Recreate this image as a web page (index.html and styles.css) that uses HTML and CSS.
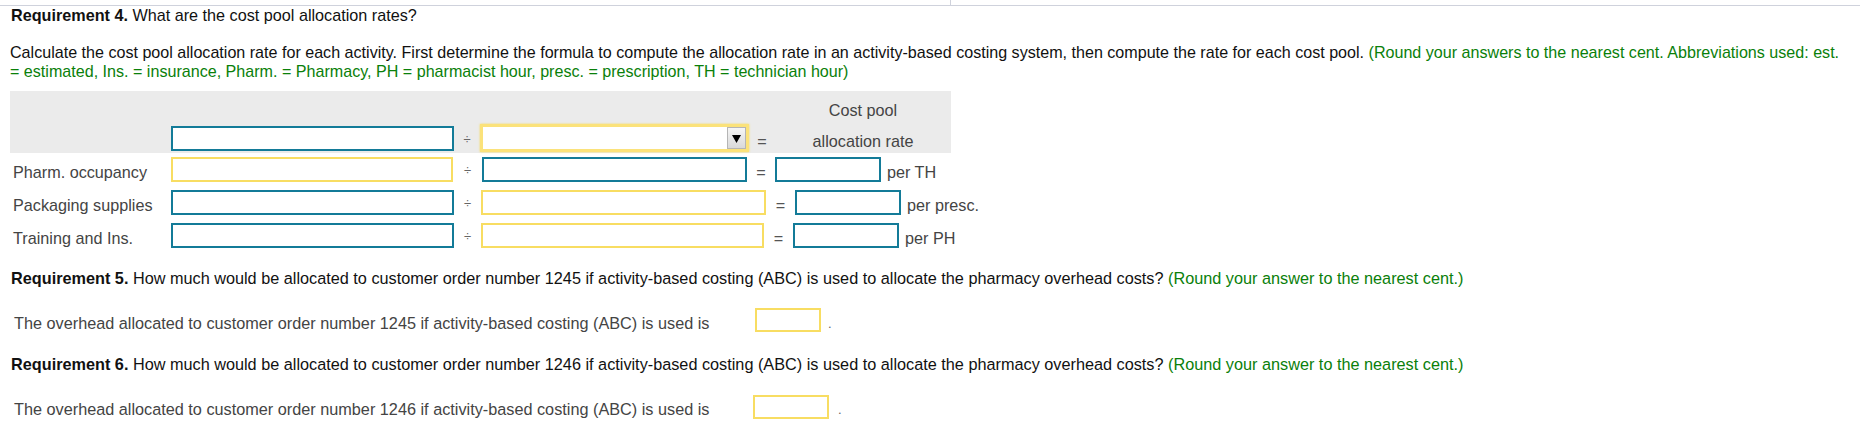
FILE: index.html
```html
<!DOCTYPE html>
<html lang="en">
<head>
<meta charset="utf-8">
<title>Requirement 4</title>
<link rel="stylesheet" href="styles.css">
</head>
<body>
<div class="topbar"><div class="topbar-seg"></div></div>
<div class="content">
  <p class="req"><b>Requirement 4.</b> What are the cost pool allocation rates?</p>
  <p class="instr">Calculate the cost pool allocation rate for each activity. First determine the formula to compute the allocation rate in an activity-based costing system, then compute the rate for each cost pool. <span class="green">(Round your answers to the nearest cent. Abbreviations used: est.<br>= estimated, Ins. = insurance, Pharm. = Pharmacy, PH = pharmacist hour, presc. = prescription, TH = technician hour)</span></p>

  <div class="abc">
    <div class="row head">
      <div class="lbl"></div>
      <input class="box teal w283" type="text">
      <div class="op op26">÷</div>
      <div class="select">
        <div class="arrow"><svg width="11" height="11" viewBox="0 0 11 11"><polygon points="1,2 10,2 5.5,10" fill="#000"/></svg></div>
      </div>
      <div class="eq eq26">=</div>
      <div class="rate-head"><div>Cost pool</div><div>allocation rate</div></div>
    </div>

    <div class="row">
      <div class="lbl">Pharm. occupancy</div>
      <input class="box yellow w282" type="text">
      <div class="op op29">÷</div>
      <input class="box teal w265" type="text">
      <div class="eq eq28">=</div>
      <input class="box teal w106" type="text">
      <div class="unit">per TH</div>
    </div>

    <div class="row">
      <div class="lbl">Packaging supplies</div>
      <input class="box teal w283" type="text">
      <div class="op op27">÷</div>
      <input class="box yellow w285" type="text">
      <div class="eq eq29">=</div>
      <input class="box teal w106" type="text">
      <div class="unit">per presc.</div>
    </div>

    <div class="row">
      <div class="lbl">Training and Ins.</div>
      <input class="box teal w283" type="text">
      <div class="op op27">÷</div>
      <input class="box yellow w283" type="text">
      <div class="eq eq29">=</div>
      <input class="box teal w106" type="text">
      <div class="unit">per PH</div>
    </div>
  </div>

  <p class="req wide req5"><b>Requirement 5.</b> How much would be allocated to customer order number 1245 if activity-based costing (ABC) is used to allocate the pharmacy overhead costs? <span class="green">(Round your answer to the nearest cent.)</span></p>
  <div class="answer ans1">
    <div class="answer-text t1">The overhead allocated to customer order number 1245 if activity-based costing (ABC) is used is</div>
    <input class="box yellow small w66" type="text">
    <div class="dot">.</div>
  </div>

  <p class="req wide req6"><b>Requirement 6.</b> How much would be allocated to customer order number 1246 if activity-based costing (ABC) is used to allocate the pharmacy overhead costs? <span class="green">(Round your answer to the nearest cent.)</span></p>
  <div class="answer ans2">
    <div class="answer-text t2">The overhead allocated to customer order number 1246 if activity-based costing (ABC) is used is</div>
    <input class="box yellow small w76" type="text">
    <div class="dot dot2">.</div>
  </div>
</div>
</body>
</html>
```

FILE: styles.css
```css
html, body {
  margin: 0;
  padding: 0;
  background: #ffffff;
}

body {
  font-family: "Liberation Sans", Arial, sans-serif;
  font-size: 16.2px;
  line-height: 19px;
  color: #111111;
}

.topbar {
  display: flex;
  height: 5px;
  border-bottom: 1px solid #cfd2dc;
}

.topbar-seg {
  width: 950px;
  border-right: 1px solid #cfd2dc;
}

.content {
  padding-left: 10px;
}

.req {
  margin: 0;
  padding-left: 1px;
}

.wide {
  font-size: 16.25px;
}

.instr {
  margin: 18px 0 0 0;
  font-size: 16.1px;
  white-space: nowrap;
}

.green {
  color: #0a800a;
}

/* activity table */
.abc {
  margin-top: 10px;
  width: 941px;
}

.row {
  display: flex;
  align-items: flex-start;
  padding: 4px 0;
}

.row.head {
  background: #ebebeb;
  align-items: flex-end;
  padding: 10px 0 2px 0;
}

.lbl {
  width: 161px;
  flex: none;
  box-sizing: border-box;
  padding: 6px 0 0 3px;
  height: 25px;
  color: #444444;
  white-space: nowrap;
}

.box {
  display: block;
  flex: none;
  box-sizing: border-box;
  height: 25px;
  margin: 0;
  padding: 0;
  background: #ffffff;
  font: inherit;
  outline: none;
}

.teal {
  border: 2px solid #137b98;
}

.yellow {
  border: 2px solid #f8dd62;
}

.w282 { width: 282px; }
.w283 { width: 283px; }
.w265 { width: 265px; }
.w285 { width: 285px; }
.w106 { width: 106px; }
.w66 { width: 66px; }
.w76 { width: 76px; }

.op {
  flex: none;
  height: 25px;
  line-height: 25px;
  text-align: center;
  font-size: 13px;
  color: #666666;
  padding-top: 1px;
  box-sizing: border-box;
}

.op26 { width: 26px; }
.op27 { width: 27px; }
.op29 { width: 29px; }

.eq {
  flex: none;
  height: 25px;
  box-sizing: border-box;
  padding-top: 6px;
  text-align: center;
  color: #555555;
}

.eq26 { width: 26px; }
.eq28 { width: 28px; }
.eq29 { width: 29px; }

.select {
  flex: none;
  width: 269px;
  height: 28px;
  box-sizing: border-box;
  border: 3px solid #fbe27a;
  box-shadow: 0 0 2px 0 #f6d95a;
  background: #ffffff;
  margin-bottom: -1px;
  display: flex;
  justify-content: flex-end;
  align-items: center;
}

.arrow {
  width: 19px;
  height: 22px;
  box-sizing: border-box;
  border: 1px solid #b5b5b5;
  background: linear-gradient(#f6f6f6, #d9d9d9);
  display: flex;
  align-items: center;
  justify-content: center;
}

.arrow svg {
  display: block;
}

.rate-head {
  flex: none;
  width: 176px;
  display: flex;
  flex-direction: column;
  gap: 12px;
  text-align: center;
  color: #444444;
}

.unit {
  flex: none;
  margin-left: 6px;
  padding-top: 6px;
  color: #444444;
  white-space: nowrap;
}

/* requirement 5 / 6 */
.req5 {
  margin-top: 17px;
}

.req6 {
  margin-top: 22px;
}

.answer {
  display: flex;
  align-items: flex-start;
}

.ans1 {
  margin-top: 20px;
}

.ans2 {
  margin-top: 21px;
}

.answer-text {
  flex: none;
  box-sizing: border-box;
  padding-left: 4px;
  color: #444444;
  white-space: nowrap;
  font-size: 16.25px;
}

.t1 { padding-top: 6px; width: 745px; }
.t2 { padding-top: 5px; width: 743px; }

.small {
  height: 24px;
}

.dot {
  margin-left: 7px;
  padding-top: 6px;
  color: #666666;
  font-size: 13px;
}

.dot2 {
  margin-left: 9px;
  padding-top: 5px;
}
```
